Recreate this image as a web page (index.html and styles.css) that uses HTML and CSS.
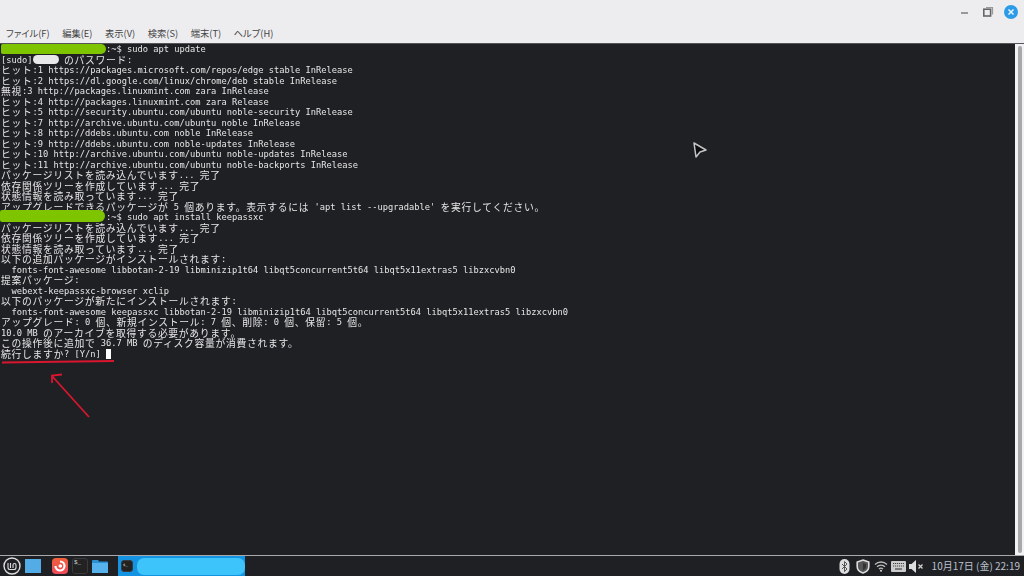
FILE: index.html
```html
<!DOCTYPE html>
<html lang="ja">
<head>
<meta charset="utf-8">
<title>Terminal</title>
<link rel="stylesheet" href="styles.css">
</head>
<body>
<div class="window">
  <header class="titlebar">
    <div class="winbtn min"><span class="min-bar"></span></div>
    <div class="winbtn"><svg width="12" height="12" viewBox="0 0 12 12"><path d="M4 1.500h6.500v7" fill="none" stroke="#999" stroke-width="1.200"/><rect x="1.800" y="3.200" width="6.800" height="6.800" fill="none" stroke="#666" stroke-width="1.600"/></svg></div>
    <div class="winbtn close"><svg width="14" height="14" viewBox="0 0 14 14"><circle cx="7" cy="7" r="7" fill="#2b9be8"/><path d="M4.500 4.500l5 5M9.500 4.500l-5 5" stroke="#eaf6ff" stroke-width="1.500"/></svg></div>
  </header>
  <nav class="menubar">
    <span>ファイル(F)</span><span>編集(E)</span><span>表示(V)</span><span>検索(S)</span><span>端末(T)</span><span>ヘルプ(H)</span>
  </nav>
  <main class="terminal">
    <div class="output">
      <div class="line">                    :~$ sudo apt update</div>
      <div class="line">[sudo]      <span class="j">のパスワード</span>:</div>
      <div class="line"><span class="j">ヒット</span>:1 https://packages.microsoft.com/repos/edge stable InRelease</div>
      <div class="line"><span class="j">ヒット</span>:2 https://dl.google.com/linux/chrome/deb stable InRelease</div>
      <div class="line"><span class="j">無視</span>:3 http://packages.linuxmint.com zara InRelease</div>
      <div class="line"><span class="j">ヒット</span>:4 http://packages.linuxmint.com zara Release</div>
      <div class="line"><span class="j">ヒット</span>:5 http://security.ubuntu.com/ubuntu noble-security InRelease</div>
      <div class="line"><span class="j">ヒット</span>:7 http://archive.ubuntu.com/ubuntu noble InRelease</div>
      <div class="line"><span class="j">ヒット</span>:8 http://ddebs.ubuntu.com noble InRelease</div>
      <div class="line"><span class="j">ヒット</span>:9 http://ddebs.ubuntu.com noble-updates InRelease</div>
      <div class="line"><span class="j">ヒット</span>:10 http://archive.ubuntu.com/ubuntu noble-updates InRelease</div>
      <div class="line"><span class="j">ヒット</span>:11 http://archive.ubuntu.com/ubuntu noble-backports InRelease</div>
      <div class="line"><span class="j">パッケージリストを読み込んでいます</span>... <span class="j">完了</span></div>
      <div class="line"><span class="j">依存関係ツリーを作成しています</span>... <span class="j">完了</span></div>
      <div class="line"><span class="j">状態情報を読み取っています</span>... <span class="j">完了</span></div>
      <div class="line"><span class="j">アップグレードできるパッケージが</span> 5 <span class="j">個あります。表示するには</span> 'apt list --upgradable' <span class="j">を実行してください。</span></div>
      <div class="line">                    :~$ sudo apt install keepassxc</div>
      <div class="line"><span class="j">パッケージリストを読み込んでいます</span>... <span class="j">完了</span></div>
      <div class="line"><span class="j">依存関係ツリーを作成しています</span>... <span class="j">完了</span></div>
      <div class="line"><span class="j">状態情報を読み取っています</span>... <span class="j">完了</span></div>
      <div class="line"><span class="j">以下の追加パッケージがインストールされます</span>:</div>
      <div class="line">  fonts-font-awesome libbotan-2-19 libminizip1t64 libqt5concurrent5t64 libqt5x11extras5 libzxcvbn0</div>
      <div class="line"><span class="j">提案パッケージ</span>:</div>
      <div class="line">  webext-keepassxc-browser xclip</div>
      <div class="line"><span class="j">以下のパッケージが新たにインストールされます</span>:</div>
      <div class="line">  fonts-font-awesome keepassxc libbotan-2-19 libminizip1t64 libqt5concurrent5t64 libqt5x11extras5 libzxcvbn0</div>
      <div class="line"><span class="j">アップグレード</span>: 0 <span class="j">個、新規インストール</span>: 7 <span class="j">個、削除</span>: 0 <span class="j">個、保留</span>: 5 <span class="j">個。</span></div>
      <div class="line">10.0 MB <span class="j">のアーカイブを取得する必要があります。</span></div>
      <div class="line"><span class="j">この操作後に追加で</span> 36.7 MB <span class="j">のディスク容量が消費されます。</span></div>
      <div class="line"><span class="j">続行しますか</span>? [Y/n] <span class="cursor"></span></div>
    </div>
    <div class="mark green g1"></div>
    <div class="mark white w1"></div>
    <div class="mark green g2"></div>
    <svg class="annot" width="130" height="12" viewBox="0 0 130 12">
      <path d="M2 6.500L114 5" fill="none" stroke="#d8162e" stroke-width="2"/>
    </svg>
    <svg class="arrow" width="44" height="50" viewBox="0 0 44 50">
      <path d="M40 45L3 4M3 11L3 3.500L13 2.500" fill="none" stroke="#d8162e" stroke-width="1.800"/>
    </svg>
    <svg class="pointer" width="16" height="20" viewBox="0 0 16 20">
      <path d="M2 2L14 9L8 11L4 16Z" fill="#0c0c10" stroke="#c4c4c4" stroke-width="1.500" stroke-linejoin="round"/>
    </svg>
    <div class="scrollbar"><div class="thumb"></div></div>
  </main>
</div>
<footer class="panel">
  <div class="launchers">
    <svg class="ico" width="18" height="18" viewBox="0 0 18 18"><circle cx="9" cy="9" r="8" fill="none" stroke="#ddd" stroke-width="1.400"/><path d="M5 6v4.500a2 2 0 0 0 2 2h4a2 2 0 0 0 2-2V8a1.500 1.500 0 0 0-3 0v3M7.500 6v5" fill="none" stroke="#ddd" stroke-width="1.100"/></svg>
    <div class="desk"></div>
    <div class="firefox"><svg width="16" height="16" viewBox="0 0 16 16"><path d="M8 3.500a4.500 4.500 0 1 1-4.500 4.500" fill="none" stroke="#fff" stroke-width="2.200"/><circle cx="8.300" cy="8" r="1.800" fill="#fff"/></svg></div>
    <div class="termicon">$_</div>
    <svg class="folder" width="16" height="14" viewBox="0 0 16 14"><path d="M0 2a1 1 0 0 1 1-1h5l1 1.500h8a1 1 0 0 1 1 1V13H0Z" fill="#2b8fd0"/><rect y="4" width="16" height="10" fill="#55b2ec"/></svg>
  </div>
  <div class="task">
    <div class="task-icon">$_</div>
    <div class="task-mark"></div>
  </div>
  <div class="tray">
    <div class="tray-icons">
      <svg width="11" height="15" viewBox="0 0 11 15"><rect x="0.500" width="10" height="15" rx="5" fill="#ddd"/><path d="M3 5l5 5-2.500 2.500V2.500L8 5l-5 5" fill="none" stroke="#444" stroke-width="0.900"/></svg>
      <svg width="14" height="15" viewBox="0 0 14 15"><path d="M7 1l5.800 2v4.500c0 3-2.500 5.500-5.800 6.500C3.700 13 1.200 10.500 1.200 7.500V3Z" fill="#555" stroke="#ddd" stroke-width="1.600"/><path d="M7 4l3 1v2.500c0 1.800-1.300 3-3 3.700Z" fill="#333"/></svg>
      <svg width="14" height="12" viewBox="0 0 14 12"><path d="M1 4.500a8.500 8.500 0 0 1 12 0M3 6.800a5.500 5.500 0 0 1 8 0M5 9a2.800 2.800 0 0 1 4 0" fill="none" stroke="#bbb" stroke-width="1.300"/><circle cx="7" cy="10.800" r="1" fill="#ddd"/></svg>
      <svg width="15" height="11" viewBox="0 0 15 11"><rect width="15" height="11" rx="1" fill="#ccc"/><path d="M2 2.500h11M2 5h11" stroke="#444" stroke-width="1" stroke-dasharray="1.200 0.800"/><path d="M4 8h7" stroke="#444" stroke-width="1.200"/></svg>
      <svg width="15" height="13" viewBox="0 0 15 13"><path d="M0 4h2.500L7 0v13L2.500 9H0Z" fill="#ddd"/><path d="M9.500 4.500l4 4M13.500 4.500l-4 4" stroke="#ccc" stroke-width="1.400"/></svg>
    </div>
    <span class="clock">10月17日 (金) 22:19</span>
  </div>
</footer>
</body>
</html>
```
FILE: styles.css
```css
* { box-sizing: border-box; }
html, body { margin: 0; padding: 0; }
body { width: 1024px; height: 576px; overflow: hidden; display: flex; flex-direction: column; background: #1f2024; }
.window { flex: 1; display: flex; flex-direction: column; min-height: 0; }
.titlebar { height: 24px; background: #ededf0; display: flex; justify-content: flex-end; align-items: center; padding: 0 5px 0 0; }
.winbtn { width: 24px; display: flex; justify-content: center; align-items: center; height: 14px; }
.close { width: 16px; margin-left: 3px; }
.min-bar { display: block; width: 7px; height: 1.500px; background: #999; margin-top: 2px; }
.menubar { height: 19px; background: #ededf0; display: flex; gap: 12.500px; padding: 0 0 1px 6px; font: 9.300px/15px "Noto Sans CJK JP", "Noto Sans", sans-serif; font-feature-settings: "palt"; color: #444; align-items: center; }
.terminal { flex: 1; position: relative; background: #1f2024; border-top: 1px solid #55555a; min-height: 0; overflow: hidden; }
.output { padding: 0 0 0 1px; color: #e6e6e6; font: 8.720px/10.520px "DejaVu Sans Mono", monospace; filter: blur(0.250px); }
.line { height: 10.520px; white-space: pre; }
.j { font-family: "Noto Sans CJK JP", sans-serif; font-size: 9.800px; letter-spacing: 0.700px; line-height: 0; vertical-align: -0.800px; }
.cursor { display: inline-block; width: 5px; height: 10px; background: #fff; vertical-align: -2px; }
.mark { position: absolute; }
.green { background: #7ec400; }
.white { background: #e8e8ea; border-radius: 5px; }
.g1 { left: 1px; top: 0; width: 105px; height: 10px; border-radius: 2px 6px 6px 2px; }
.w1 { left: 33px; top: 11px; width: 26px; height: 9px; }
.g2 { left: 0; top: 166px; width: 105px; height: 12px; border-radius: 2px 6px 6px 2px; }
.annot { position: absolute; left: 0; top: 312px; }
.arrow { position: absolute; left: 49px; top: 328px; }
.pointer { position: absolute; left: 692px; top: 97px; }
.scrollbar { position: absolute; right: 0; top: 0; bottom: 0; width: 9px; background: #f2f2f4; display: flex; justify-content: center; padding-top: 2px; }
.thumb { width: 4px; height: 507px; background: #a8a8aa; border-radius: 2px; }
.panel { height: 21px; background: #1f2024; border-top: 1px solid #a9a9ab; display: flex; align-items: center; }
.launchers { display: flex; align-items: center; gap: 4px; padding-left: 3px; width: 118px; }
.ico { flex: none; }
.desk { width: 16px; height: 14px; background: #54ace6; flex: none; }
.firefox { width: 16px; height: 16px; border-radius: 4px; background: linear-gradient(#f0603a, #f04a5c); display: flex; margin-left: 7px; }
.termicon, .task-icon { background: #222; border: 1px solid #3a3a3a; border-radius: 3px; color: #ddd; font: 6px/8px "Liberation Mono", monospace; padding-left: 1px; }
.termicon { width: 16px; height: 16px; }
.folder { flex: none; }
.task { width: 127px; height: 20px; background: #1593e3; display: flex; align-items: center; gap: 4px; padding-left: 3px; }
.task-icon { width: 12px; height: 12px; font-size: 4px; background: #222; flex: none; }
.task-mark { width: 108px; height: 17px; background: #3cc4fb; border-radius: 7px; }
.tray { margin-left: auto; display: flex; align-items: center; gap: 6px; padding-right: 4px; }
.tray-icons { display: grid; grid-template-columns: repeat(5, 18px); justify-items: center; align-items: center; }
.clock { font: 10px/14px "Noto Sans CJK JP", "Noto Sans", sans-serif; color: #bcc2ce; }
```
